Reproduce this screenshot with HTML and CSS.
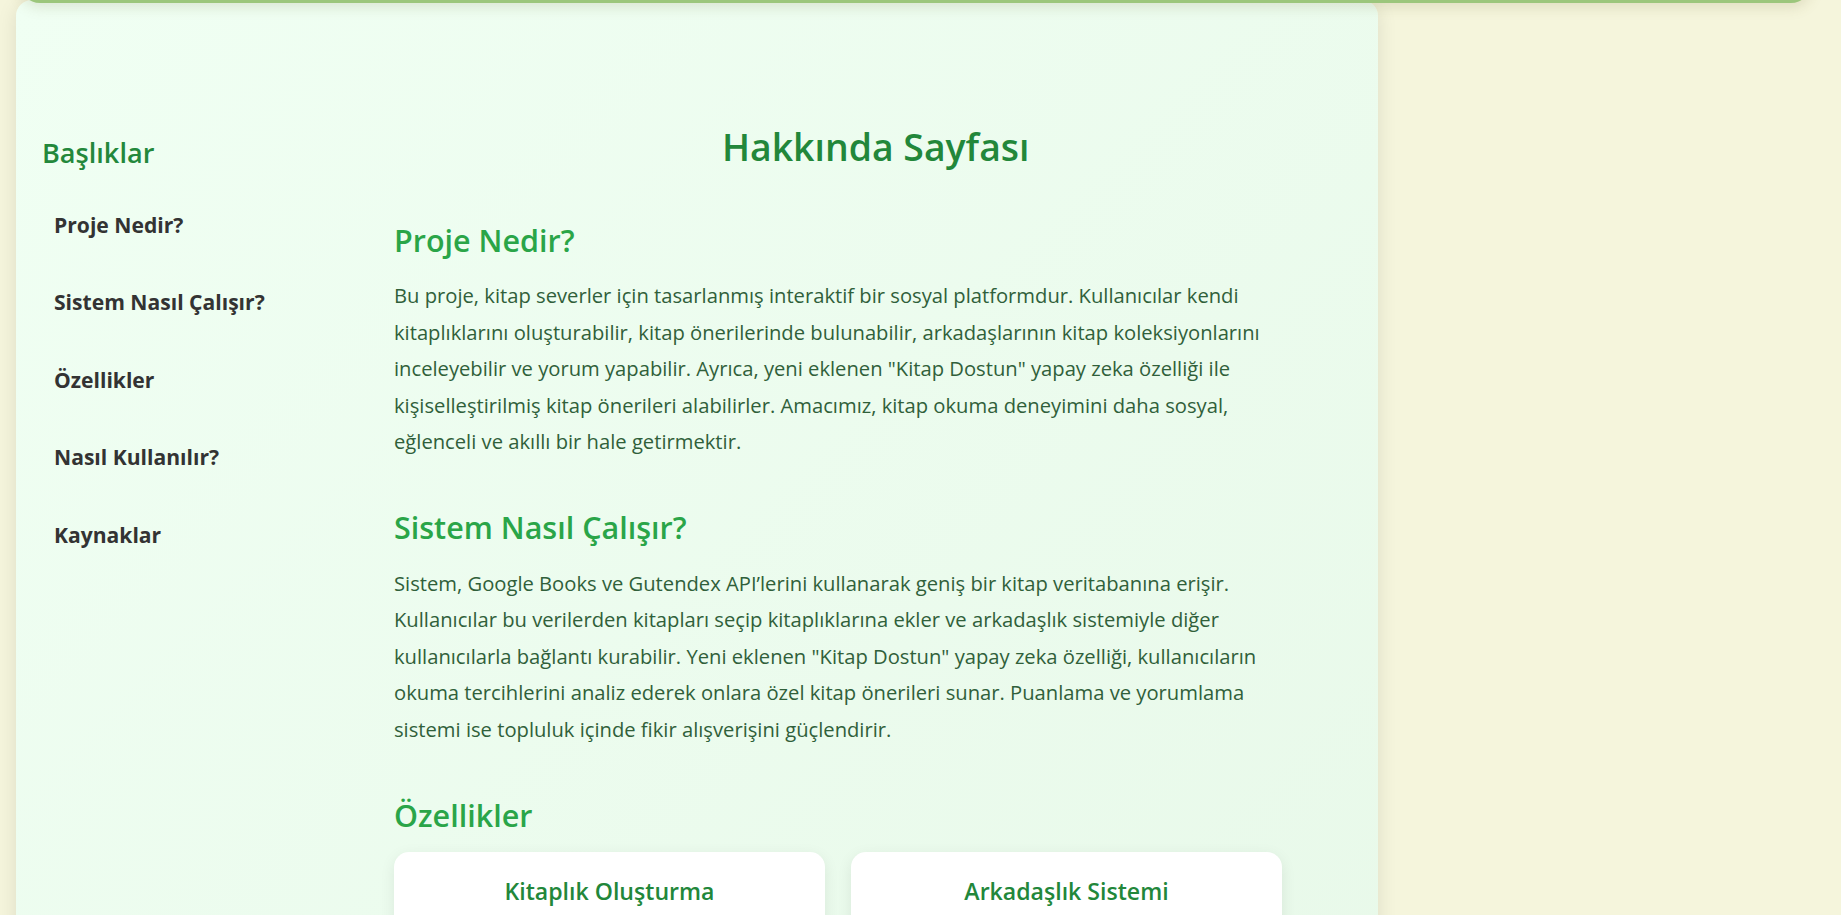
FILE: index.html
```html
<!DOCTYPE html>
<html lang="tr">
<head>
<meta charset="utf-8">
<title>Hakkında Sayfası</title>
<link rel="stylesheet" href="styles.css">
</head>
<body>
<div class="nav-peek"></div>
<div class="about">
  <aside class="sidebar">
    <h3 class="sidebar-title">Başlıklar</h3>
    <ul class="toc">
      <li><a href="#proje">Proje Nedir?</a></li>
      <li><a href="#sistem">Sistem Nasıl Çalışır?</a></li>
      <li><a href="#ozellikler">Özellikler</a></li>
      <li><a href="#kullanim">Nasıl Kullanılır?</a></li>
      <li><a href="#kaynaklar">Kaynaklar</a></li>
    </ul>
  </aside>
  <main class="content">
    <h1 class="page-title">Hakkında Sayfası</h1>
    <section class="block" id="proje">
      <h2>Proje Nedir?</h2>
      <p>Bu proje, kitap severler için tasarlanmış interaktif bir sosyal platformdur. Kullanıcılar kendi kitaplıklarını oluşturabilir, kitap önerilerinde bulunabilir, arkadaşlarının kitap koleksiyonlarını inceleyebilir ve yorum yapabilir. Ayrıca, yeni eklenen "Kitap Dostun" yapay zeka özelliği ile kişiselleştirilmiş kitap önerileri alabilirler. Amacımız, kitap okuma deneyimini daha sosyal, eğlenceli ve akıllı bir hale getirmektir.</p>
    </section>
    <section class="block" id="sistem">
      <h2>Sistem Nasıl Çalışır?</h2>
      <p>Sistem, Google Books ve Gutendex API’lerini kullanarak geniş bir kitap veritabanına erişir. Kullanıcılar bu verilerden kitapları seçip kitaplıklarına ekler ve arkadaşlık sistemiyle diğer kullanıcılarla bağlantı kurabilir. Yeni eklenen "Kitap Dostun" yapay zeka özelliği, kullanıcıların okuma tercihlerini analiz ederek onlara özel kitap önerileri sunar. Puanlama ve yorumlama sistemi ise topluluk içinde fikir alışverişini güçlendirir.</p>
    </section>
    <section class="block" id="ozellikler">
      <h2>Özellikler</h2>
      <div class="features">
        <div class="feature-card">
          <h3>Kitaplık Oluşturma</h3>
          <p>Okuduğunuz ve okumak istediğiniz kitapları kendi kitaplığınızda toplayın.</p>
        </div>
        <div class="feature-card">
          <h3>Arkadaşlık Sistemi</h3>
          <p>Arkadaşlarınızı ekleyin ve kitap koleksiyonlarını inceleyin.</p>
        </div>
      </div>
    </section>
  </main>
</div>
</body>
</html>
```

FILE: styles.css
```css
* { box-sizing: border-box; }

html, body {
  margin: 0;
  padding: 0;
}

body {
  background: #f5f5dc;
  font-family: "Open Sans", "Noto Sans", sans-serif;
  color: #333;
  overflow: hidden;
  height: 915px;
}

.nav-peek {
  position: absolute;
  top: -17px;
  left: 20px;
  right: 30px;
  height: 20px;
  background: #9cc67c;
  border-radius: 0 0 20px 20px;
  box-shadow: 0 4px 14px rgba(120, 110, 60, 0.18);
  z-index: 5;
}

.about {
  width: 74%;
  margin-left: 16px;
  min-height: 1400px;
  display: flex;
  gap: 52px;
  padding: 0 21px 40px 26px;
  border-radius: 16px;
  background: linear-gradient(135deg, #f0fff3 0%, #e7f8e8 100%);
  box-shadow: 0 4px 20px rgba(0, 0, 0, 0.1);
}

.sidebar {
  width: 300px;
  flex-shrink: 0;
  padding-top: 137px;
}

.sidebar-title {
  margin: 0 0 16px;
  font-size: 27.1px;
  line-height: 1.2;
  font-weight: 600;
  color: #23883b;
}

.toc {
  list-style: none;
  margin: 0;
  padding: 0;
}

.toc a {
  display: block;
  padding: 23px 12px;
  line-height: 31.5px;
  font-size: 21.1px;
  font-weight: 700;
  color: #333;
  text-decoration: none;
}

.content {
  flex: 1;
  padding-top: 125px;
}

.page-title {
  margin: 0 0 52px;
  text-align: center;
  font-size: 37.4px;
  line-height: 1.2;
  font-weight: 600;
  color: #22873a;
}

.block {
  max-width: 921px;
  margin-bottom: 49.5px;
}

.block h2 {
  margin: 0 0 18.8px;
  font-size: 30.5px;
  line-height: 1.2;
  font-weight: 600;
  color: #2aa548;
}

.block p {
  margin: 0;
  font-size: 20.2px;
  line-height: 36.48px;
  color: #30603a;
}

.features {
  max-width: 888px;
  display: grid;
  grid-template-columns: 1fr 1fr;
  gap: 26px;
}

.feature-card {
  background: #fff;
  border-radius: 15px;
  padding: 26px 20px;
  text-align: center;
  box-shadow: 0 4px 15px rgba(0, 0, 0, 0.08);
}

.feature-card h3 {
  margin: 0 0 12px;
  font-size: 23.1px;
  line-height: 1.2;
  font-weight: 600;
  color: #22873a;
}

.feature-card p {
  font-size: 17px;
  line-height: 1.6;
}
```
